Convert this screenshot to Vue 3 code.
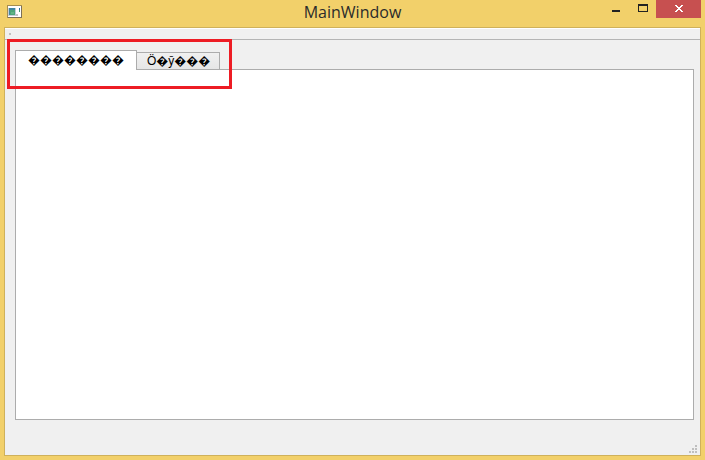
<script setup>
import { ref } from 'vue'

const tabs = ['\uFFFD'.repeat(8), 'Ö\uFFFDȳ\uFFFD\uFFFD\uFFFD']
const active = ref(0)
</script>

<template>
  <div class="window">
    <header class="titlebar">
      <svg class="app-icon" width="16" height="14" viewBox="0 0 16 14" shape-rendering="crispEdges" aria-hidden="true">
        <path fill="#a58d50" d="M0 0h15v13H0z" />
        <path fill="#7c7058" d="M14 1h1v12H1v-1h13z" />
        <path fill="#fff" d="M1 1h13v11H1z" />
        <path fill="#c3cdd6" d="M1 3h8v8H1z" />
        <path fill="#3f86a0" d="M2 3h6v7H2z" />
        <path fill="#4da578" d="M3 5h5v5H3z" />
        <path fill="#62b585" d="M4 7h3v2H4z" />
        <path fill="#2c6f9c" d="M12 3h1v2h-1z" />
        <path fill="#409a70" d="M12 5h1v2h-1z" />
        <path fill="#c4c4c4" d="M9 9h2v2H9z" />
      </svg>
      <h1>MainWindow</h1>
      <div class="controls">
        <button type="button" class="minimize" aria-label="Minimize">
          <svg width="8" height="2" viewBox="0 0 8 2"><path fill="#222" d="M0 0h8v2H0z" /></svg>
        </button>
        <button type="button" class="maximize" aria-label="Maximize">
          <svg width="10" height="8" viewBox="0 0 10 8" shape-rendering="crispEdges"><path fill="#222" fill-rule="evenodd" d="M0 0h10v8H0zM1 2v5h8V2z" /></svg>
        </button>
        <button type="button" class="close" aria-label="Close">
          <svg width="8" height="7" viewBox="0 0 8 7" shape-rendering="crispEdges">
            <path fill="#fff" d="M0 0h2v1h1v1h2V1h1V0h2v1H7v1H6v1H5v1h1v1h1v1h1v1H6V6H5V5H3v1H2v1H0V6h1V5h1V4h1V3H2V2H1V1H0z" />
          </svg>
        </button>
      </div>
    </header>
    <div class="client">
      <div class="toolbar"><span class="handle"></span></div>
      <main>
        <div class="tabs" role="tablist">
          <button v-for="(tab, i) in tabs" :id="`tab-${i}`" :key="i" type="button" role="tab" class="tab"
            :class="{ active: active === i }" :aria-selected="active === i" aria-controls="panel" @click="active = i">{{ tab }}</button>
        </div>
        <section id="panel" class="panel" role="tabpanel" :aria-labelledby="`tab-${active}`"></section>
        <div class="highlight"></div>
      </main>
      <footer>
        <svg width="8" height="8" viewBox="0 0 8 8" shape-rendering="crispEdges" aria-hidden="true">
          <path fill="#bfbfbf" d="M6 0h2v2H6zM3 3h2v2H3zM6 3h2v2H6zM0 6h2v2H0zM3 6h2v2H3zM6 6h2v2H6z" />
        </svg>
      </footer>
    </div>
  </div>
</template>

<style>
body { margin: 0; }
</style>

<style scoped>
* { box-sizing: border-box; }
.window {
  display: flex;
  flex-direction: column;
  min-height: 100vh;
  padding: 0 4px 4px;
  background: #f2d06a;
  font-family: "Open Sans", "Noto Sans", sans-serif;
}
.titlebar {
  display: grid;
  grid-template-columns: 1fr auto 1fr;
  height: 27px;
}
.app-icon { margin: 5px 0 0 3px; }
h1 {
  margin: 0;
  color: #2b2b2b;
  font-size: 16px;
  font-weight: 400;
  line-height: 25px;
}
.controls { display: flex; justify-content: flex-end; }
.controls button {
  display: flex;
  justify-content: center;
  width: 27px;
  height: 18px;
  padding: 4px 0 0;
  border: 0;
  background: none;
}
.controls .minimize { padding-top: 10px; }
.controls .close { width: 45px; padding-top: 5px; background: #c75050; }
.client {
  display: flex;
  flex: 1;
  flex-direction: column;
  border: 1px solid #cfb15b;
  background: #f0f0f0;
}
.toolbar {
  height: 12px;
  padding: 4px;
  border-top: 1px solid #fff;
  border-bottom: 1px solid #b4b4b4;
}
.handle { display: block; width: 2px; height: 2px; background: #c0c0c0; }
main {
  position: relative;
  display: flex;
  flex: 1;
  flex-direction: column;
  padding: 10px 6px 0 10px;
}
.tabs { display: flex; align-items: flex-end; height: 20px; }
.tab {
  height: 18px;
  padding: 0 9px 2px 10px;
  border: 1px solid #acacac;
  border-left: 0;
  border-bottom: 0;
  background: linear-gradient(#f0f0f0, #e5e5e5);
  color: #000;
  font: 12px/16px "Liberation Sans", "Noto Sans", sans-serif;
}
.tab.active {
  z-index: 1;
  height: 20px;
  padding: 0 12px 2px;
  border-left: 1px solid #acacac;
  background: #fff;
}
.panel { flex: 1; margin-top: -1px; border: 1px solid #acacac; background: #fff; }
.highlight {
  position: absolute;
  z-index: 2;
  top: -1px;
  left: 2px;
  width: 225px;
  height: 50px;
  border: 3px solid #ed1c24;
  pointer-events: none;
}
footer {
  display: flex;
  align-items: flex-end;
  justify-content: flex-end;
  height: 35px;
  padding: 0 3px 2px;
}
</style>
